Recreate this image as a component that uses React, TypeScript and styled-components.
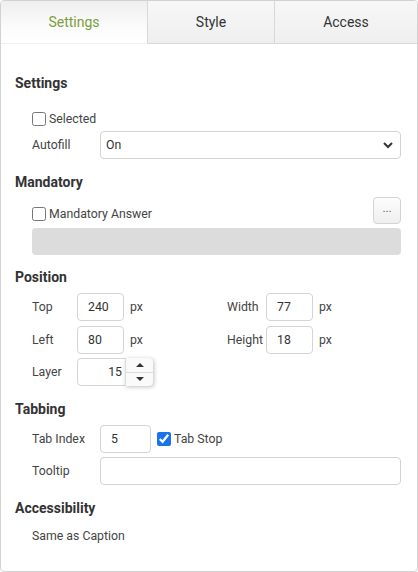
import React from "react";
import styled, { createGlobalStyle } from "styled-components";

const GlobalStyle = createGlobalStyle`
  html, body {
    margin: 0;
    padding: 0;
    background: #fff;
  }
  body {
    font-family: Roboto, "Liberation Sans", Arial, sans-serif;
    font-size: 12.3px;
    color: #333;
  }
  * { box-sizing: border-box; }
`;

const Panel = styled.div`
  width: 418px;
  height: 572px;
  border: 1px solid #d2d2d2;
  border-radius: 4px;
  overflow: hidden;
  display: flex;
  flex-direction: column;
`;

const TabBar = styled.div`
  display: flex;
  height: 43px;
  flex-shrink: 0;
`;

const Tab = styled.div<{ $active?: boolean; $width: number; $last?: boolean }>`
  width: ${(p) => p.$width}px;
  flex: ${(p) => (p.$last ? "1" : "none")};
  display: flex;
  align-items: center;
  justify-content: center;
  font-size: 14px;
  color: ${(p) => (p.$active ? "#7a9f3c" : "#333")};
  border-right: ${(p) => (p.$last ? "none" : "1px solid #d8d8d8")};
  border-bottom: ${(p) => (p.$active ? "1px solid transparent" : "1px solid #d8d8d8")};
  background: ${(p) =>
    p.$active
      ? "linear-gradient(to bottom, #efefef 0%, #fbfbfb 60%, #ffffff 100%)"
      : "linear-gradient(to bottom, #f7f7f7 0%, #efefef 100%)"};
`;

const Content = styled.div`
  padding: 29px 16px 0 14px;
  display: flex;
  flex-direction: column;
`;

const Heading = styled.div<{ $after: number }>`
  font-size: 14px;
  font-weight: 700;
  line-height: 20px;
  color: #333;
  margin-bottom: ${(p) => p.$after}px;
`;

const Section = styled.div<{ $after: number }>`
  display: flex;
  flex-direction: column;
  padding-left: 17px;
  margin-bottom: ${(p) => p.$after}px;
`;

const Row = styled.div<{ $gap?: number; $align?: string }>`
  display: flex;
  align-items: ${(p) => p.$align ?? "center"};
  margin-bottom: ${(p) => p.$gap ?? 0}px;
`;

const Label = styled.span<{ $width?: number }>`
  width: ${(p) => (p.$width ? `${p.$width}px` : "auto")};
  flex-shrink: 0;
  color: #444;
`;

const CheckLabel = styled.label`
  display: flex;
  align-items: center;
  gap: 3px;
  color: #444;
  line-height: 20px;
`;

const Check = styled.input.attrs({ type: "checkbox" })`
  width: 14px;
  height: 14px;
  margin: 0;
  accent-color: #1a73e8;
`;

const TextBox = styled.input<{ $width?: number }>`
  width: ${(p) => (p.$width ? `${p.$width}px` : "100%")};
  flex: ${(p) => (p.$width ? "none" : "1")};
  height: 28px;
  border: 1px solid #d4d4d4;
  border-radius: 4px;
  padding: 0 10px;
  font: inherit;
  color: #333;
  background: #fff;
  outline: none;
`;

const SelectBox = styled.div`
  flex: 1;
  height: 28px;
  border: 1px solid #d4d4d4;
  border-radius: 4px;
  display: flex;
  align-items: center;
  justify-content: space-between;
  padding: 0 6px 0 5px;
  color: #333;
`;

const DotsButton = styled.button`
  width: 28px;
  height: 27px;
  border: 1px solid #d4d4d4;
  border-radius: 4px;
  background: linear-gradient(to bottom, #fdfdfd, #efefef);
  font-size: 11px;
  color: #555;
  padding: 0 0 4px;
  line-height: 1;
  margin-left: auto;
`;

const DisabledBox = styled.div`
  height: 27px;
  background: #dcdcdc;
  border-radius: 4px;
  margin-top: 4px;
`;

const Unit = styled.span`
  margin-left: 6px;
  color: #444;
`;

const Half = styled.div<{ $width?: number }>`
  display: flex;
  align-items: center;
  flex-shrink: 0;
  width: ${(p) => (p.$width ? `${p.$width}px` : "auto")};
`;

const Spinner = styled.div`
  display: flex;
  width: 76px;
  height: 28px;
  border: 1px solid #d4d4d4;
  border-radius: 4px;
  background: #fff;
`;

const SpinValue = styled.input`
  width: 47px;
  border: none;
  outline: none;
  text-align: right;
  padding: 0 3px 0 0;
  font: inherit;
  color: #333;
  background: transparent;
`;

const SpinButtons = styled.div`
  flex: 1;
  display: flex;
  flex-direction: column;
  border-left: 1px solid #ddd;
  border-radius: 0 4px 4px 0;
  box-shadow: 1px 1px 4px rgba(0, 0, 0, 0.25);
  margin: -1px -1px -1px 0;
  background: #fafafa;
`;

const SpinButton = styled.div<{ $top?: boolean }>`
  flex: 1;
  display: flex;
  align-items: center;
  justify-content: center;
  border-bottom: ${(p) => (p.$top ? "1px solid #ddd" : "none")};
`;

const Triangle = styled.div<{ $up?: boolean }>`
  width: 0;
  height: 0;
  border-left: 4px solid transparent;
  border-right: 4px solid transparent;
  ${(p) => (p.$up ? "border-bottom: 4px solid #333;" : "border-top: 4px solid #333;")}
`;

const StopCheck = styled(CheckLabel)`
  margin-left: 6px;
`;

const Plain = styled.div`
  color: #444;
  line-height: 20px;
`;

function Chevron() {
  return (
    <svg width="12" height="12" viewBox="0 0 12 12">
      <path d="M2 4 L6 8 L10 4" fill="none" stroke="#333" strokeWidth="2" />
    </svg>
  );
}

export default function App() {
  return (
    <>
      <GlobalStyle />
      <Panel>
        <TabBar>
          <Tab $active $width={147}>Settings</Tab>
          <Tab $width={127}>Style</Tab>
          <Tab $width={142} $last>Access</Tab>
        </TabBar>
        <Content>
          <Heading $after={16}>Settings</Heading>
          <Section $after={13}>
            <Row $gap={2}>
              <CheckLabel>
                <Check />
                Selected
              </CheckLabel>
            </Row>
            <Row>
              <Label $width={68}>Autofill</Label>
              <SelectBox>
                <span>On</span>
                <Chevron />
              </SelectBox>
            </Row>
          </Section>

          <Heading $after={5}>Mandatory</Heading>
          <Section $after={12}>
            <Row $align="flex-end">
              <CheckLabel>
                <Check />
                Mandatory Answer
              </CheckLabel>
              <DotsButton>...</DotsButton>
            </Row>
            <DisabledBox />
          </Section>

          <Heading $after={6}>Position</Heading>
          <Section $after={13}>
            <Row $gap={5}>
              <Half $width={195}>
                <Label $width={45}>Top</Label>
                <TextBox $width={47} defaultValue="240" />
                <Unit>px</Unit>
              </Half>
              <Half>
                <Label $width={39}>Width</Label>
                <TextBox $width={47} defaultValue="77" />
                <Unit>px</Unit>
              </Half>
            </Row>
            <Row $gap={4}>
              <Half $width={195}>
                <Label $width={45}>Left</Label>
                <TextBox $width={47} defaultValue="80" />
                <Unit>px</Unit>
              </Half>
              <Half>
                <Label $width={39}>Height</Label>
                <TextBox $width={47} defaultValue="18" />
                <Unit>px</Unit>
              </Half>
            </Row>
            <Row>
              <Label $width={45}>Layer</Label>
              <Spinner>
                <SpinValue defaultValue="15" />
                <SpinButtons>
                  <SpinButton $top>
                    <Triangle $up />
                  </SpinButton>
                  <SpinButton>
                    <Triangle />
                  </SpinButton>
                </SpinButtons>
              </Spinner>
            </Row>
          </Section>

          <Heading $after={6}>Tabbing</Heading>
          <Section $after={13}>
            <Row $gap={4}>
              <Label $width={68}>Tab Index</Label>
              <TextBox $width={51} defaultValue="5" />
              <StopCheck>
                <Check defaultChecked />
                Tab Stop
              </StopCheck>
            </Row>
            <Row>
              <Label $width={68}>Tooltip</Label>
              <TextBox />
            </Row>
          </Section>

          <Heading $after={8}>Accessibility</Heading>
          <Section $after={0}>
            <Plain>Same as Caption</Plain>
          </Section>
        </Content>
      </Panel>
    </>
  );
}
